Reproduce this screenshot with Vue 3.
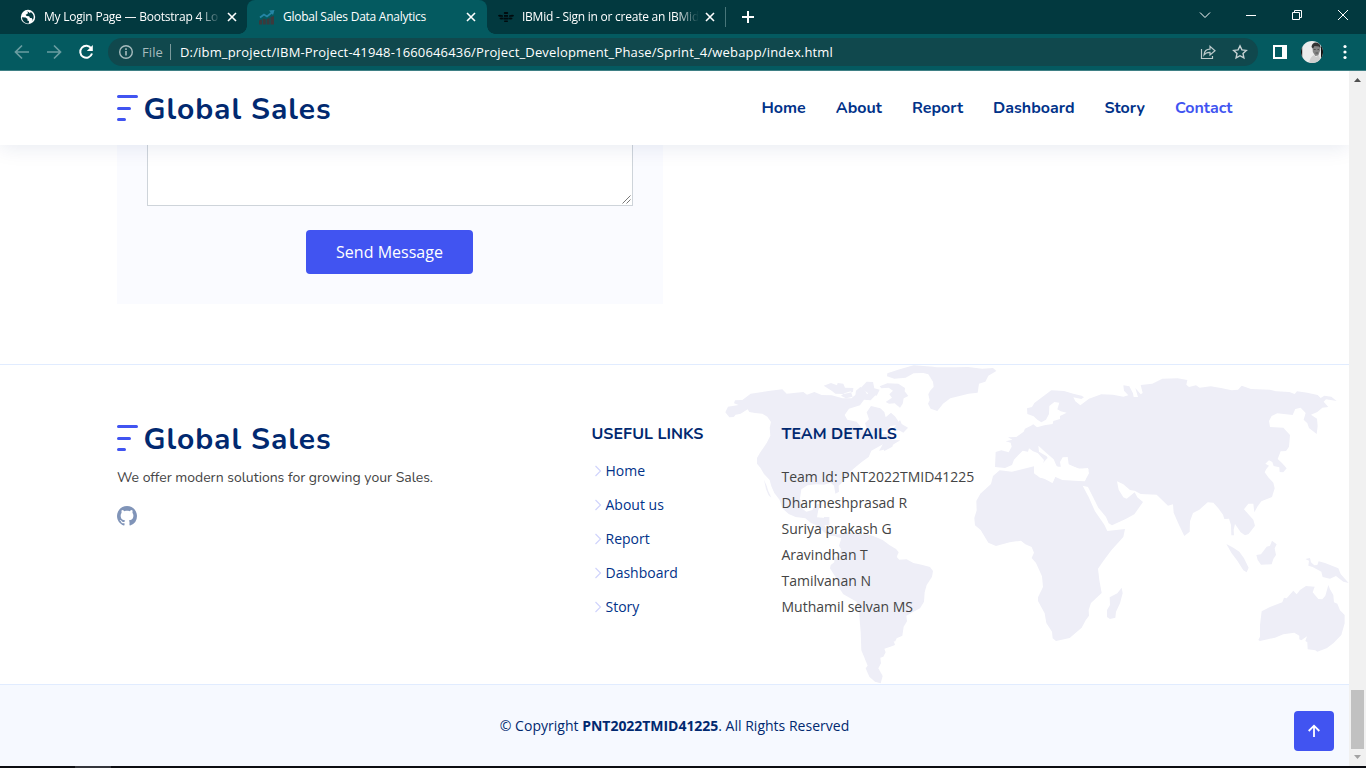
<script setup>
const nav = [
  { label: 'Home' },
  { label: 'About' },
  { label: 'Report' },
  { label: 'Dashboard' },
  { label: 'Story' },
  { label: 'Contact', active: true },
]
const links = ['Home', 'About us', 'Report', 'Dashboard', 'Story']
const team = [
  'Team Id: PNT2022TMID41225',
  'Dharmeshprasad R',
  'Suriya prakash G',
  'Aravindhan T',
  'Tamilvanan N',
  'Muthamil selvan MS',
]

// Tracks a label so that it fills the given width whichever font is present.
const vFit = {
  mounted(el, { value }) {
    const count = el.textContent.length
    const natural = el.getBoundingClientRect().width
    const base = parseFloat(getComputedStyle(el).letterSpacing) || 0
    el.style.letterSpacing = `${base + (value - natural) / count}px`
  },
}
</script>

<template>
  <div class="window">
    <div class="tabs">
      <div class="tab first">
        <svg class="globe" viewBox="0 0 16 16"><circle cx="8" cy="8" r="7.2" fill="#fff" /><path d="M2 8.2l3.600.2 2 1.500-.3 1.600 1.700.6-.2 2.400C4.700 14.400 2 11.600 2 8.200zM6.500 2.300l1.400 1-.3 1.500-2 .9 1 1.300 2.600.2.800 1.800 1.600.1 1 1.400-1 1.700C14.800 9.500 14.300 5 10.800 2.900L9.900 4.200 8.600 3z" fill="#02393f" /></svg>
        <div class="clip"><span v-fit="174" class="tab-text">My Login Page — Bootstrap 4 Lo</span></div>
        <svg class="x" viewBox="0 0 10 10"><path d="M1 1l8 8M9 1l-8 8" /></svg>
      </div>
      <div class="tab active">
        <svg class="chart" viewBox="0 0 16 16"><path d="M0 15.500v-4l3-1v5zM3.800 15.500V9.500l3 1v5zM7.600 15.500V10l3-1v6.500zM11.500 15.500V8l3.500-1v8.500z" fill="#3a3a3d" /><path d="M1 8.500l4-3 3 2 5-4" fill="none" stroke="#2586a5" stroke-width="1.800" /><path d="M10 1.500l5.500-.5-1.500 5z" fill="#2586a5" /></svg>
        <div class="clip"><span v-fit="143" class="tab-text">Global Sales Data Analytics</span></div>
        <svg class="x" viewBox="0 0 10 10"><path d="M1 1l8 8M9 1l-8 8" /></svg>
      </div>
      <div class="tab third">
        <svg class="bee" viewBox="0 0 16 16"><g fill="#010b0e"><path d="M0 6.500Q1 4.800 5 6.500v1.300H1.500Q0 7.500 0 6.500zM16 6.500Q15 4.800 11 6.500v1.300h3.500Q16 7.500 16 6.500z" /><ellipse cx="3.500" cy="9.500" rx="2" ry=".9" /><ellipse cx="12.500" cy="9.500" rx="2" ry=".9" /><rect x="5.800" y="3" width="4.400" height="2" rx="1" /><rect x="6" y="6" width="4" height="1.800" /><rect x="5.500" y="8.700" width="5" height="1.800" /><rect x="6" y="11.500" width="4" height="1.500" rx=".7" /></g></svg>
        <div class="clip"><span v-fit="177" class="tab-text">IBMid - Sign in or create an IBMid</span></div>
        <svg class="x" viewBox="0 0 10 10"><path d="M1 1l8 8M9 1l-8 8" /></svg>
      </div>
      <span class="tab-divider"></span>
      <svg class="plus" viewBox="0 0 12 12"><path d="M6 0v12M0 6h12" /></svg>
      <div class="controls">
        <svg viewBox="0 0 16 16"><path d="M3 5.500l5 5 5-5" /></svg>
        <svg viewBox="0 0 16 16"><path d="M3 8.500h10" /></svg>
        <svg viewBox="0 0 16 16"><path d="M3.500 5.500h7v7h-7zM5.500 5.500v-2h7v7h-2" /></svg>
        <svg viewBox="0 0 16 16"><path d="M3 3l10 10M13 3L3 13" /></svg>
      </div>
    </div>

    <div class="toolbar">
      <svg class="arrow" viewBox="0 0 16 16"><path d="M15 8H2M8 1.500L1.500 8 8 14.500" /></svg>
      <svg class="arrow" viewBox="0 0 16 16"><path d="M1 8h13M8 1.500L14.500 8 8 14.500" /></svg>
      <svg class="reload" viewBox="0 0 16 16"><path d="M13.300 4.500A6 6 0 1 0 14 9.500" fill="none" stroke="#fff" stroke-width="2" /><path d="M14.800 1v6H8.800z" fill="#fff" /></svg>
      <div class="omnibox">
        <svg class="info" viewBox="0 0 16 16"><circle cx="8" cy="8" r="6.300" fill="none" stroke="#a7bcbe" stroke-width="1.400" /><path d="M8 7v4.500M8 4.300v1.600" stroke="#a7bcbe" stroke-width="1.600" /></svg>
        <span v-fit="21" class="scheme">File</span>
        <span class="bar"></span>
        <span v-fit="653" class="url">D:/ibm_project/IBM-Project-41948-1660646436/Project_Development_Phase/Sprint_4/webapp/index.html</span>
        <svg class="share" viewBox="0 0 16 16"><path d="M1.500 5v9.500h11v-2.500M4 11c.4-4 2.600-5.800 6-5.800V2.300L15 6.700l-5 4.300V8.300C7.300 8.200 5.500 9 4 11z" /></svg>
        <svg class="star" viewBox="0 0 16 16"><path d="M8 1.800l1.900 4.100 4.400.5-3.300 3 .9 4.500L8 11.700l-3.900 2.200.9-4.500-3.300-3 4.400-.5z" /></svg>
      </div>
      <svg class="panel" viewBox="0 0 14 14"><path d="M0 0h14v14H0z" fill="#fff" /><path d="M2 2h7v10H2z" fill="#045a60" /></svg>
      <svg class="avatar" viewBox="0 0 22 22">
        <defs><clipPath id="face"><circle cx="11" cy="11" r="11" /></clipPath></defs>
        <g clip-path="url(#face)"><path d="M0 0h22v22H0z" fill="#ececec" /><path d="M20 0h2v22h-2zM0 5h1.200v12H0z" fill="#111" /><path d="M11.500 5q3-3 7-2l.8 6-2 5.500-3 .5-2.500-4z" fill="#858585" /><path d="M10.500 6Q11 1.500 15 1.500q5 .5 4.500 6l-1.500-2-4.500-.5-1.500 2.500z" fill="#333" /><path d="M12.700 8.500h2M16.500 8.500h1.500M14.500 12h2.500" stroke="#444" stroke-width=".8" /><path d="M8 22q1-6 5-8l2 2 3-2 2 8z" fill="#cfcfcf" /></g>
      </svg>
      <svg class="dots" viewBox="0 0 4 16"><circle cx="2" cy="2.500" r="1.600" /><circle cx="2" cy="8" r="1.600" /><circle cx="2" cy="13.500" r="1.600" /></svg>
    </div>

    <div class="viewport">
      <main class="page">
        <header class="header">
          <div class="logo">
            <svg class="mark" viewBox="0 0 21 26"><path d="M1.500 1.500h18M1.500 13.500h11M1.500 24.500h6" /></svg>
            <span v-fit="188" class="brand">Global Sales</span>
          </div>
          <nav class="nav">
            <a v-for="item in nav" :key="item.label" :class="{ current: item.active }">{{ item.label }}</a>
          </nav>
        </header>

        <section class="contact">
          <form class="form">
            <div class="message">
              <svg class="grip" viewBox="0 0 9 9"><path d="M.5 8.500l8-8M4.500 8.500l4-4" /></svg>
            </div>
            <button type="button" class="send"><span v-fit="107">Send Message</span></button>
          </form>
        </section>

        <footer class="footer">
          <div class="footer-top">
            <svg class="map" viewBox="0 365 1349 319">
              <g transform="translate(700 355) scale(.33333)">
                <path d="M76 172L84 155 116 150 102 145 105 136 127 135 152 116 205 108 247 103 260 116 310 111 321 119 343 111 365 120 395 121 428 130 454 130 466 120 468 107 481 96 496 107 501 118 515 106 527 120 512 136 492 134 480 151 447 161 434 180 442 194 470 200 492 228 502 226 495 205 507 193 500 172 513 153 541 160 553 171 557 187 573 173 586 185 602 209 571 213 562 225 545 230 545 238 570 237 575 254 601 256 577 270 551 284 537 287 549 268 514 287 506 306 486 320 466 337 450 351 437 370 425 384 416 392 417 410 406 416 402 392 392 383 372 389 349 388 323 391 304 403 300 430 307 461 319 470 337 465 347 448 366 445 355 464 351 487 376 489 374 512 383 527 398 536 424 539 407 544 390 542 372 532 355 514 332 503 316 490 287 486 266 477 246 459 239 435 223 414 214 394 209 375 192 357 181 338 171 326 171 309 181 292 200 264 211 242 209 218 213 201 202 185 187 176 165 174 148 171 143 163 122 176 107 179 101 186 88 187z" />
                <path d="M192 374l8 18 5 17 9 19-8-7-8-19zM371 92l22-8 18 7 2-7 17 2 5 12 25 1-1 12-28 6-25-1-10-8zM452 109l-19 6-10 7 15 8 20-5zM482 99l18-19 19 1 4 19 16 4-9 18-25-7zM539 94l23-9 33 1 20 13-1 10 11 14-14 7-3 16-8 12-16-13-17 1-10-5 19-13-8-10 11-11-13-9-22 2zM582 218l18-23 5 12 19 11-14 15-13-7-15 2zM545 272l9-4 7 6 20-10-4 11-24 13zM562 55l37-12 42-12 59 4 28 8-39 5-4 5-44 2-24 13-34 3-22-7z" />
                <path d="M655 50l30 8 14 22 2 16-11 12-5 10 4 18-5 10 8 15 20 7 17-22 22-16 55-14 27-3 4-27 19-6 9-18 24-14-10-9-32 2-43-5-38 1-61 0-17 8z" />
                <path d="M398 534L414 540 443 530 468 537 500 538 520 543 548 555 568 570 588 582 596 592 590 606 598 614 620 613 640 624 665 629 690 636 699 648 696 665 680 690 674 712 672 740 660 760 635 773 619 782 621 799 611 815 607 842 590 850 585 860 581 857 585 870 571 875 553 881 557 892 550 905 541 908 543 925 535 940 548 963 542 985 525 980 508 965 497 940 503 932 490 900 484 886 482 830 477 770 470 740 430 718 418 700 406 665 390 640 392 630 403 622 403 610 416 600 423 582 417 572 424 550 410 546z" />
                <path d="M372 486h16v25h-15zM388 513l12 23-12-4z" />
              </g>
              <g transform="translate(960 355) scale(.33333)">
                <path d="M105 336L107 291 124 286 146 292 155 275 152 263 137 259 157 254 144 247 169 246 191 230 195 221 213 212 220 208 231 217 253 211 278 207 280 198 300 192 300 183 320 173 302 169 292 163 298 143 283 141 268 153 267 177 258 194 244 202 232 194 221 184 202 177 201 160 216 156 223 144 252 122 274 106 312 108 340 116 365 122 372 127 364 132 340 127 346 139 361 151 387 131 424 118 459 119 490 125 505 121 492 107 490 91 508 94 519 115 521 126 534 126 526 99 542 118 548 114 542 90 577 86 607 71 653 70 682 75 679 89 687 96 708 91 719 98 752 94 783 99 815 106 834 104 845 92 873 102 929 104 948 109 988 111 1004 117 1011 109 1042 113 1073 120 1082 129 1093 122 1114 125 1130 138 1098 133 1091 140 1105 156 1087 158 1072 171 1053 179 1071 191 1073 213 1070 237 1047 219 1042 205 1031 194 1037 174 1022 158 1006 162 998 180 952 175 935 183 927 198 930 216 970 218 990 240 987 275 978 288 962 289 953 312 966 324 980 340 970 352 959 351 958 337 941 333 937 321 927 316 916 326 927 332 919 342 914 352 926 368 940 383 944 400 936 426 904 439 893 454 883 472 880 446 865 446 852 463 880 494 885 512 866 537 855 541 842 532 825 507 821 525 822 541 814 541 813 510 807 491 793 492 789 479 775 460 760 443 743 442 718 464 699 474 690 499 689 530 673 543 656 508 641 473 639 448 624 452 590 419 542 417 524 407 510 405 490 388 471 379 476 404 490 427 500 431 524 412 532 427 549 441 523 478 497 492 456 511 446 505 438 486 415 458 399 426 384 396 368 392 387 428 405 469 433 509 442 528 495 522 490 546 454 586 430 618 414 641 418 675 425 714 393 744 386 765 387 782 377 796 365 818 329 849 288 858 278 850 276 830 259 804 254 775 234 738 234 727 249 696 246 664 228 624 215 609 222 593 215 576 196 568 183 557 149 562 108 573 85 563 62 525 45 511 43 489 50 466 49 438 61 416 93 387 99 363 119 346 156 350 222 334 226 357 277 384 285 365 307 375 374 379 387 355 384 339 356 341 326 328 323 306 308 307 300 321 303 338 290 334 281 313 260 295 235 272 237 290 260 304 270 321 248 332 252 315 233 294 219 289 207 280 204 290 188 287 162 314 156 330 135 339z" />
                <path d="M222 335L222 355 240 368 259 372 278 383 287 364 317 374 375 378 386 343 358 341 341 335 291 335 281 321 262 309 244 330z" fill="#fff" />
                <path d="M485 698L488 715 480 745 468 770 466 788 450 792 441 786 441 765 450 750 449 727 472 715zM799 567L820 578 838 590 852 610 866 638 860 652 850 646 832 617 815 595zM889 600L903 598 920 575 930 572 936 557 950 568 944 580 948 600 940 612 935 628 903 629 893 615zM1036 612L1050 609 1053 622 1063 631 1072 630 1076 619 1095 624 1135 640 1142 657 1166 684 1150 680 1128 663 1110 671 1088 666 1084 650 1058 636 1045 632 1047 617z" />
                <path d="M905 769L930 756 967 742 972 728 980 730 1000 707 1010 718 1020 705 1038 693 1064 695 1058 712 1075 732 1087 733 1096 722 1105 690 1110 703 1120 720 1122 742 1132 746 1140 766 1154 780 1154 805 1144 840 1120 865 1100 880 1072 890 1066 886 1043 883 1042 862 1036 858 1041 844 1024 856 1018 853 1018 842 1003 833 970 838 945 848 900 858 895 855 900 845 900 810z" />
              </g>
            </svg>
            <div class="columns">
              <div class="about">
                <div class="logo">
                  <svg class="mark" viewBox="0 0 21 26"><path d="M1.500 1.500h18M1.500 13.500h11M1.500 24.500h6" /></svg>
                  <span v-fit="188" class="brand">Global Sales</span>
                </div>
                <p class="slogan"><span v-fit="316">We offer modern solutions for growing your Sales.</span></p>
                <svg class="github" viewBox="0 0 16 16"><path d="M8 0C3.580 0 0 3.580 0 8c0 3.540 2.290 6.530 5.470 7.590.4.070.550-.170.550-.380 0-.190-.010-.820-.010-1.490-2.010.370-2.530-.490-2.690-.940-.090-.230-.480-.940-.820-1.130-.280-.150-.680-.520-.010-.530.630-.010 1.080.580 1.230.820.720 1.210 1.870.870 2.330.660.070-.520.280-.870.510-1.070-1.780-.200-3.640-.890-3.640-3.950 0-.870.310-1.590.820-2.150-.080-.200-.360-1.020.080-2.120 0 0 .670-.210 2.200.820.640-.180 1.320-.270 2-.270s1.360.090 2 .270c1.530-1.040 2.200-.820 2.200-.820.440 1.100.160 1.920.080 2.120.510.560.820 1.270.820 2.150 0 3.070-1.870 3.750-3.650 3.950.290.250.540.730.540 1.480 0 1.070-.010 1.930-.010 2.200 0 .210.150.460.550.380A8.010 8.010 0 0 0 16 8c0-4.420-3.580-8-8-8z" /></svg>
              </div>
              <div class="useful">
                <h4><span v-fit="112">USEFUL LINKS</span></h4>
                <ul>
                  <li v-for="link in links" :key="link">
                    <svg class="chevron" viewBox="0 0 12 12"><path d="M3.500 1l5 5-5 5" /></svg>
                    <a>{{ link }}</a>
                  </li>
                </ul>
              </div>
              <div class="team">
                <h4><span v-fit="115.500">TEAM DETAILS</span></h4>
                <p v-for="line in team" :key="line">{{ line }}</p>
              </div>
            </div>
          </div>
          <div class="copyright">
            <span v-fit="82.500">© Copyright&nbsp;</span><strong v-fit="136">PNT2022TMID41225</strong><span v-fit="131">. All Rights Reserved</span>
          </div>
        </footer>

        <a class="top"><svg viewBox="0 0 16 16"><path d="M8 14V3M2.700 8L8 2.700 13.300 8" /></svg></a>
      </main>
      <div class="scrollbar">
        <svg viewBox="0 0 17 17"><path d="M5 11h7L8.500 7z" fill="#505050" /></svg>
        <div class="thumb"></div>
        <svg viewBox="0 0 17 17"><path d="M5 6h7l-3.500 4z" fill="#a3a3a3" /></svg>
      </div>
    </div>
    <div class="taskbar"><span></span></div>
  </div>
</template>

<style>
html, body { margin: 0; overflow: hidden; }
</style>

<style scoped>
* { box-sizing: border-box; }
.window { width: 1366px; height: 768px; display: flex; flex-direction: column; overflow: hidden; font-family: "Open Sans", "Noto Sans", sans-serif; background: #fff; }
span { white-space: nowrap; }
svg { display: block; flex: none; }

.tabs { height: 34px; flex: none; display: flex; align-items: center; background: #02393f; color: #fff; }
.tab { height: 34px; display: flex; align-items: center; font-size: 12px; }
.tab svg:first-child { width: 16px; height: 16px; }
.first { width: 247px; padding-left: 20px; }
.active { width: 240px; padding-left: 12px; background: #045a60; border-radius: 8px 8px 0 0; position: relative; }
.active::before, .active::after { content: ""; position: absolute; bottom: 0; width: 8px; height: 8px; }
.active::before { left: -8px; background: radial-gradient(circle at 0 0, transparent 7.500px, #045a60 8px); }
.active::after { right: -8px; background: radial-gradient(circle at 100% 0, transparent 7.500px, #045a60 8px); }
.third { width: 238px; padding-left: 11px; }
.clip { width: 178px; margin-left: 8px; line-height: 18px; mask-image: linear-gradient(90deg, #000 154px, transparent 177px); }
.active .clip { mask-image: none; }
.tab-text { display: inline-block; }
.x { width: 10px; height: 10px; margin-left: 5px; fill: none; stroke: #fff; stroke-width: 1.600; }
.tab-divider { width: 1px; height: 20px; background: #48767a; }
.plus { width: 12px; height: 12px; margin-left: 16px; fill: none; stroke: #fff; stroke-width: 2; }
.controls { margin-left: auto; display: flex; gap: 30px; padding: 0 15px 5px 0; }
.controls svg { width: 16px; height: 16px; fill: none; stroke: #fff; }

.toolbar { height: 37px; flex: none; display: flex; align-items: center; padding-left: 14px; background: #045a60; border-bottom: 1px solid #3f8085; }
.arrow { width: 16px; height: 16px; margin-right: 16px; fill: none; stroke: #6a9da1; stroke-width: 1.700; }
.reload { width: 16px; height: 16px; margin-right: 14px; }
.omnibox { width: 1150px; height: 28px; border-radius: 14px; background: #10484d; display: flex; align-items: center; padding-left: 10px; font-size: 13px; color: #fff; }
.info { width: 16px; height: 16px; margin-right: 8px; }
.scheme { color: #a7bcbe; }
.bar { width: 1px; height: 16px; margin: 0 9px 0 7px; background: #7b999b; }
.share { width: 16px; height: 16px; margin-left: auto; fill: none; stroke: #bccacb; stroke-width: 1.200; }
.star { width: 16px; height: 16px; margin: 0 10px 0 16px; fill: none; stroke: #c6d2d3; stroke-width: 1.400; }
.panel { width: 14px; height: 14px; margin-left: 15px; }
.avatar { width: 22px; height: 22px; margin-left: 14px; }
.dots { width: 4px; height: 16px; margin-left: 20px; fill: #fff; }

.viewport { height: 695px; flex: none; display: flex; }
.page { width: 1349px; height: 695px; position: relative; display: flex; flex-direction: column; background: #fff; color: #444; overflow: hidden; }
.header { height: 74px; flex: none; display: flex; align-items: center; justify-content: space-between; padding: 0 116.500px 0 117px; background: #fff; box-shadow: 0 2px 20px rgba(1, 41, 112, .1); position: relative; z-index: 2; }
.logo { display: flex; align-items: center; height: 36px; }
.mark { width: 21px; height: 26px; margin-right: 5.500px; fill: none; stroke: #4154f1; stroke-width: 3; stroke-linecap: round; }
.brand { padding-top: 4px; font: 700 30px/36px Nunito, Lato, sans-serif; letter-spacing: 1px; color: #012970; }
.nav { display: flex; gap: 30px; font: 700 16px/24px Nunito, Lato, sans-serif; color: #013289; }
.nav a { white-space: nowrap; }
.nav .current { color: #4154f1; }

.contact { height: 219px; flex: none; padding-left: 117px; }
.form { width: 546px; height: 159px; background: #fafbff; display: flex; flex-direction: column; align-items: center; }
.message { width: 486px; height: 61px; background: #fff; border: 1px solid #ced4da; border-top: 0; display: flex; align-items: flex-end; justify-content: flex-end; padding: 1px; }
.grip { width: 9px; height: 9px; fill: none; stroke: #555; stroke-width: .8; }
.send { width: 167px; height: 44px; margin: 24px 0 0 -1px; padding: 0; border: 0; border-radius: 4px; background: #4154f1; color: #fff; font: 400 16px/24px "Open Sans", sans-serif; }

.footer { flex: none; font-size: 14px; }
.footer-top { height: 321px; border-top: 1px solid #e1ecff; border-bottom: 1px solid #e1ecff; position: relative; }
.map { position: absolute; left: 0; top: 0; width: 1349px; height: 319px; fill: #eeeef7; }
.columns { position: relative; display: grid; grid-template-columns: 474.500px 190px 1fr; padding: 55px 0 0 117px; }
.slogan { margin: 10px 0 0; font: 400 14px/24px Nunito, Lato, sans-serif; }
.github { width: 20px; height: 20px; margin: 16px 0 0 -.5px; fill: #8094b8; }
h4 { margin: 2px 0 0; font: 700 16px/24px Nunito, Lato, sans-serif; color: #012970; }
ul { margin: 8px 0 0; padding: 0; list-style: none; }
li { height: 34px; display: flex; align-items: center; color: #013289; line-height: 24px; }
.chevron { width: 12px; height: 12px; margin-right: 2px; fill: none; stroke: #d0d4fc; stroke-width: 1.200; }
.team h4 { margin-bottom: 18px; }
.team p { margin: 0; line-height: 26px; }
.copyright { height: 81px; background: #f6f9ff; color: #012970; display: flex; justify-content: center; align-items: center; line-height: 24px; }
.top { position: absolute; right: 15px; bottom: 15px; width: 40px; height: 40px; border-radius: 4px; background: #4154f1; display: flex; align-items: center; justify-content: center; }
.top svg { width: 16px; height: 16px; fill: none; stroke: #fff; stroke-width: 1.800; }

.scrollbar { width: 17px; background: #f1f1f1; display: flex; flex-direction: column; }
.scrollbar svg { width: 17px; height: 17px; }
.thumb { width: 13px; height: 59px; margin: auto 2px 0; background: #c1c1c1; }
.taskbar { height: 2px; background: #0c0d12; padding-left: 75px; }
.taskbar span { display: block; width: 36px; height: 2px; background: #34363c; }
</style>
